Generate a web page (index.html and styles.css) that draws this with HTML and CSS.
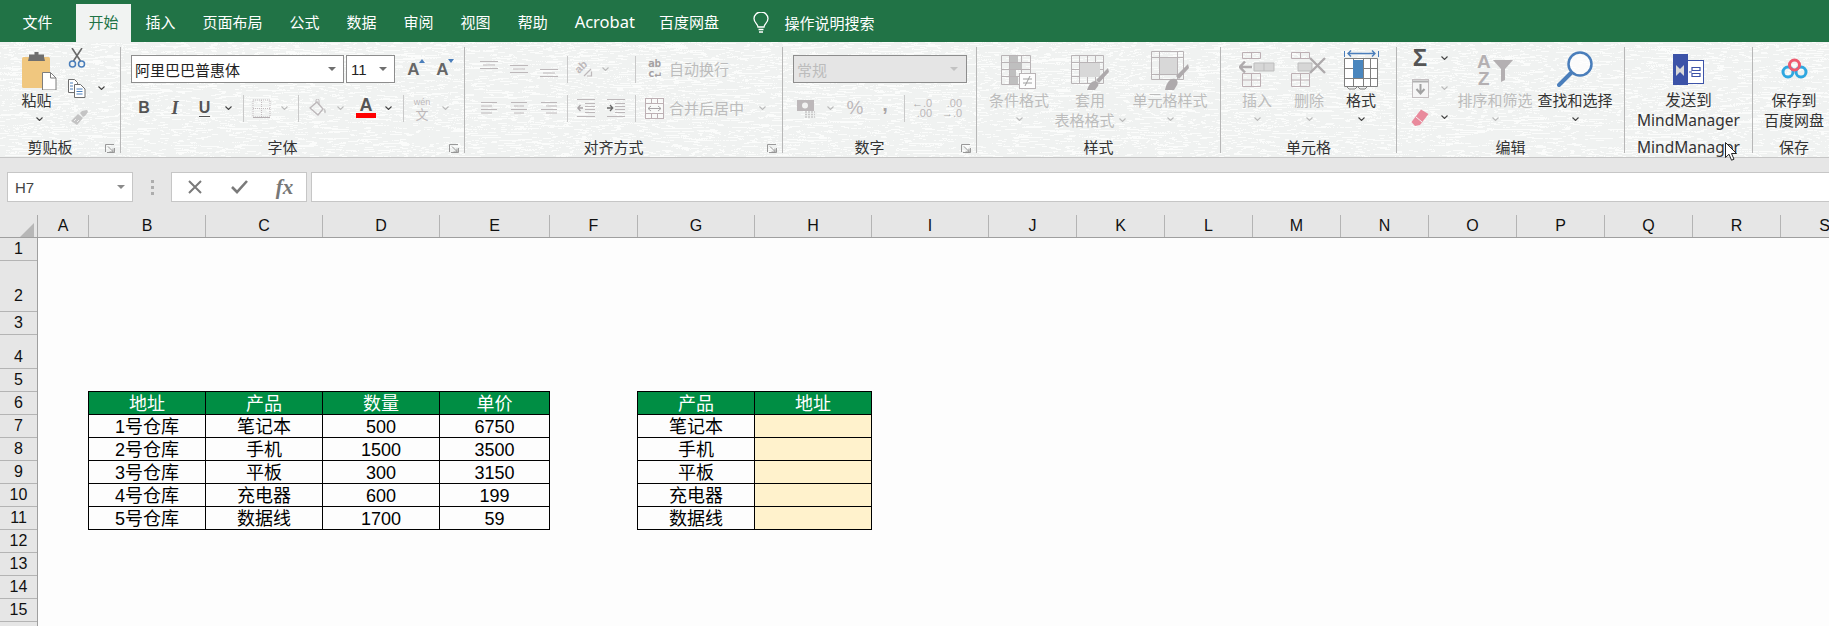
FILE: index.html
```html
<!DOCTYPE html>
<html lang="zh-CN">
<head>
<meta charset="utf-8">
<title>Excel</title>
<link rel="stylesheet" href="styles.css">
</head>
<body>
<svg class="sprite" width="0" height="0" aria-hidden="true">
  <symbol id="chev" viewBox="0 0 7 4"><path d="M.5.5 3.5 3.5 6.5.5" fill="none" stroke="currentColor" stroke-width="1.1"/></symbol>
  <symbol id="launch" viewBox="0 0 10 9"><path d="M.5 8V.5H9M3 2.5l5 5M8 4.5v3.5H4.5M2 8.5h7.5V4" fill="none" stroke="currentColor" stroke-width=".9"/></symbol>
</svg>

<div class="app">
  <header class="tabbar">
    <span class="tab tab-file">文件</span>
    <span class="tab tab-active">开始</span>
    <span class="tab">插入</span>
    <span class="tab">页面布局</span>
    <span class="tab">公式</span>
    <span class="tab">数据</span>
    <span class="tab">审阅</span>
    <span class="tab">视图</span>
    <span class="tab">帮助</span>
    <span class="tab tab-latin">Acrobat</span>
    <span class="tab">百度网盘</span>
    <span class="tell">
      <svg width="16" height="22" viewBox="0 0 16 22"><path d="M5 15c0-3-4-4-4-8.500a7 6.500 0 0 1 14 0C15 11 11 12 11 15zM5.500 17.500h5M6 20h4" fill="none" stroke="#fff" stroke-width="1.300"/></svg>
      <span>操作说明搜索</span>
    </span>
  </header>

  <section class="ribbon">
    <svg class="texture" width="1829" height="115" aria-hidden="true">
      <filter id="waves" x="0" y="0" width="100%" height="100%">
        <feTurbulence type="fractalNoise" baseFrequency="0.007 0.22" numOctaves="2" seed="7"/>
        <feColorMatrix values="0 0 0 0 1  0 0 0 0 1  0 0 0 0 1  1 0 0 0 0"/>
        <feComponentTransfer><feFuncA type="discrete" tableValues="0 0 0 0 0 0 0 0 0 0 0 0 0 0 0 .75 0 0 0 .75 0 0 0 .75 0 0 0 .75 0 0 0 .75 0 0 0 .75 0 0 0 .75 0 0 0 .75 0 0 0 0 0 0 0 0 0 0 0 0 0 0 0 0"/></feComponentTransfer>
      </filter>
      <rect width="1829" height="115" filter="url(#waves)"/>
    </svg>

    <!-- 剪贴板 -->
    <div class="group g1">
      <div class="gbody clip">
        <div class="paste">
          <svg width="35" height="39" viewBox="0 0 35 39"><rect x="0" y="6" width="28" height="31" rx="1.500" fill="#f0c77f"/><path d="M7 6V3.500h5.500V1h4v2.500H22V6l1 4H6z" fill="#6f6f6f"/><path d="M20.500 21.500h8l5.500 5.500v12h-13.500z" fill="#fff" stroke="#7d7d7d"/><path d="M28.500 21.500V27H34" fill="none" stroke="#7d7d7d"/></svg>
          <span class="t">粘贴</span>
          <svg class="chev dark"><use href="#chev"/></svg>
        </div>
        <div class="smallgrid clipgrid">
          <svg width="18" height="20" viewBox="0 0 18 20"><path d="M4 0l8.500 13M14 0 5.500 13" stroke="#6a6a6a" stroke-width="1.600" fill="none"/><circle cx="4.500" cy="16" r="3" fill="none" stroke="#4a7ebb" stroke-width="1.500"/><circle cx="13.500" cy="16" r="3" fill="none" stroke="#4a7ebb" stroke-width="1.500"/></svg>
          <span></span>
          <svg width="18" height="19" viewBox="0 0 18 19"><path d="M.5.500h6l3 3v10h-9z" fill="#fff" stroke="#6f6f6f"/><path d="M6.500 5.500h6l4.500 4.500v8.500H6.500z" fill="#fff" stroke="#6f6f6f"/><path d="M2 4h3M2 7h3M2 10h3M8.500 10h6M8.500 12.500h6M8.500 15h6" stroke="#4a7ebb"/></svg>
          <svg class="chev dark"><use href="#chev"/></svg>
          <svg class="painter" width="17" height="15" viewBox="0 0 17 15"><path d="M0 11 7 4l5 4-6 7zM9 3l2-2 5-1 1 2-3 4-2 1z" fill="#c4c4c4"/><path d="M3 11l2-2M6 12l2-2" stroke="#eee"/></svg>
          <span></span>
        </div>
      </div>
      <div class="glabel"><span>剪贴板</span><svg class="launch"><use href="#launch"/></svg></div>
    </div>

    <!-- 字体 -->
    <div class="group g2">
      <div class="gbody rows">
        <div class="row fontrow1">
          <div class="combo combo-font"><span>阿里巴巴普惠体</span><i class="caret"></i></div>
          <div class="combo combo-size"><span class="lat">11</span><i class="caret"></i></div>
          <span class="grow">A<i class="tri up"></i></span>
          <span class="grow">A<i class="tri down"></i></span>
        </div>
        <div class="row fontrow2">
          <b class="fmt">B</b>
          <i class="fmt italic">I</i>
          <span class="fmt under">U</span>
          <svg class="chev dark"><use href="#chev"/></svg>
          <i class="vdiv"></i>
          <svg width="19" height="19" viewBox="0 0 19 19"><path d="M1 1h17v17H1zM9.500 1v17M1 9.500h17" fill="none" stroke="#c3bcbf" stroke-dasharray="1 1"/><path d="M1 18.500h17" stroke="#b5b0b2"/></svg>
          <svg class="chev off"><use href="#chev"/></svg>
          <i class="vdiv"></i>
          <svg width="18" height="18" viewBox="0 0 18 18"><path d="M1 9 8 3l6 7-5 6z" fill="none" stroke="#bdb8ba" stroke-width="1.400"/><path d="M7 4V1.500a1.500 1.500 0 0 1 3 0V6" fill="none" stroke="#bdb8ba"/><path d="M15 9c2 2 2.500 4 1.500 5s-2-1-1.500-5z" fill="#c8c8c8"/></svg>
          <svg class="chev off"><use href="#chev"/></svg>
          <span class="fontcolor"><span>A</span><i></i></span>
          <svg class="chev dark"><use href="#chev"/></svg>
          <i class="vdiv"></i>
          <span class="wen"><small>wén</small><span>文</span></span>
          <svg class="chev off"><use href="#chev"/></svg>
        </div>
      </div>
      <div class="glabel"><span>字体</span><svg class="launch"><use href="#launch"/></svg></div>
    </div>

    <!-- 对齐方式 -->
    <div class="group g3">
      <div class="gbody rows">
        <div class="row alignrow1">
          <svg class="a1" width="18" height="20" viewBox="0 0 18 20"><path d="M0 2.500h18M3 6h12M0 9.500h18" stroke="#bdb8ba"/></svg>
          <svg width="18" height="20" viewBox="0 0 18 20"><path d="M0 6.500h18M3 10h12M0 13.500h18" stroke="#bdb8ba"/></svg>
          <svg width="18" height="20" viewBox="0 0 18 20"><path d="M0 10.500h18M3 14h12M0 17.500h18" stroke="#bdb8ba"/></svg>
          <i class="vdiv"></i>
          <svg width="18" height="18" viewBox="0 0 18 18"><text class="rot" transform="translate(4 14) rotate(-45)" x="0" y="0">ab</text><path d="M9 16 16 9M12 16h4.500v-4.500" fill="none" stroke="#bdb8ba" stroke-width="1.200"/></svg>
          <svg class="chev off"><use href="#chev"/></svg>
          <i class="vdiv vdiv-end"></i>
          <span class="abc"><span>ab</span><span>c↵</span></span>
          <span class="t off">自动换行</span>
        </div>
        <div class="row alignrow2">
          <svg width="16" height="12" viewBox="0 0 16 12"><path d="M0 .500h16M0 4h11M0 7.500h16M0 11h11" stroke="#bdb8ba"/></svg>
          <svg width="16" height="12" viewBox="0 0 16 12"><path d="M0 .500h16M3 4h10M0 7.500h16M3 11h10" stroke="#bdb8ba"/></svg>
          <svg width="16" height="12" viewBox="0 0 16 12"><path d="M0 .500h16M5 4h11M0 7.500h16M5 11h11" stroke="#bdb8ba"/></svg>
          <i class="vdiv"></i>
          <svg width="18" height="18" viewBox="0 0 18 18"><path d="M0 .500h18M8 4.500h10M8 7.500h10M8 10.500h10M8 13.500h10M0 17.500h18" stroke="#bdb8ba"/><path d="M6 9H1M3.500 6 .8 9l2.700 3" fill="none" stroke="#a8a4a6" stroke-width="1.300"/></svg>
          <svg width="18" height="18" viewBox="0 0 18 18"><path d="M0 .500h18M8 4.500h10M8 7.500h10M8 10.500h10M8 13.500h10M0 17.500h18" stroke="#bdb8ba"/><path d="M0 9h5M3 6l2.700 3L3 12" fill="none" stroke="#6a6a6a" stroke-width="1.300"/></svg>
          <i class="vdiv"></i>
          <svg width="19" height="21" viewBox="0 0 19 21"><rect x=".5" y=".5" width="18" height="20" fill="#fff" fill-opacity=".5" stroke="#bdb0b4"/><path d="M.5 5.500h18M.5 15.500h18M6.500.5v5M12.500.5v5M6.500 15.500v5M12.500 15.500v5" stroke="#bdb0b4"/><path d="M3 10.500h13M3 10.500l3-2.500M3 10.500l3 2.500M16 10.500 13 8M16 10.500 13 13" fill="none" stroke="#a8a4a6"/></svg>
          <span class="t off">合并后居中</span>
          <svg class="chev off"><use href="#chev"/></svg>
        </div>
      </div>
      <div class="glabel"><span>对齐方式</span><svg class="launch"><use href="#launch"/></svg></div>
    </div>

    <!-- 数字 -->
    <div class="group g4">
      <div class="gbody rows">
        <div class="row numrow1">
          <div class="combo combo-num"><span>常规</span><i class="caret"></i></div>
        </div>
        <div class="row numrow2">
          <svg width="19" height="19" viewBox="0 0 19 19"><rect x="0" y="1" width="17" height="11" fill="#bdb8ba"/><circle cx="8" cy="6.500" r="3" fill="#f2f2f2"/><path d="M8 13h10M8 15.500h10M8 18h10" stroke="#c8c8c8" stroke-width="1.300" stroke-dasharray="2 1"/></svg>
          <svg class="chev off"><use href="#chev"/></svg>
          <span class="sym">%</span>
          <span class="sym comma">,</span>
          <i class="vdiv"></i>
          <span class="dec"><span><b>←</b>.0</span><span>.00</span></span>
          <span class="dec"><span>.00</span><span><b>→</b>.0</span></span>
        </div>
      </div>
      <div class="glabel"><span>数字</span><svg class="launch"><use href="#launch"/></svg></div>
    </div>

    <!-- 样式 -->
    <div class="group g5">
      <div class="gbody bigs">
        <div class="big b84">
          <svg width="36" height="43" viewBox="0 0 36 43"><g fill="none" stroke="#b9b4b6"><path d="M.5 8.500h29v29H.5zM.5 15.500h29M.5 22.500h29M.5 29.500h29M8.500 8.500v29M20.500 8.500v29"/></g><path d="M9 9h8v6H9zM9 16h12v6H9zM9 23h6v6H9zM9 30h8v7H9z" fill="#bfbfbf"/><rect x="18.500" y="26.500" width="16" height="15" fill="#fdfdfd" stroke="#b9b4b6"/><path d="M22 32h9M22 36h9M24 39l5-10" stroke="#9e9e9e" fill="none"/></svg>
          <span class="t off">条件格式</span>
          <svg class="chev off"><use href="#chev"/></svg>
        </div>
        <div class="big b58">
          <svg width="38" height="43" viewBox="0 0 38 43"><g fill="none" stroke="#b9b4b6"><path d="M.5 8.500h32v28H.5zM.5 15.500h32M.5 22.500h32M.5 29.500h32M8.500 8.500v28M16.500 8.500v28M24.500 8.500v28"/></g><path d="M9 16h20v14H9z" fill="#d8d8d8"/><path d="M37 21 25 33l3 3 10-11z" fill="#aeaaac"/><path d="M16 43c2-6 5-9 8-9s4 3 3 5l-3 4z" fill="#aeaaac"/></svg>
          <span class="t off">套用</span>
          <span class="t off nowrap">表格格式 <svg class="chev off inl"><use href="#chev"/></svg></span>
        </div>
        <div class="big b102">
          <svg width="38" height="43" viewBox="0 0 38 43"><g fill="none" stroke="#b9b4b6"><path d="M.5 4.500h32v28H.5zM.5 10.500h32M.5 27.500h32M8.500 4.500v28M26.500 4.500v28"/></g><path d="M9 11h17v16H9z" fill="#d8d8d8"/><path d="M37 17 25 29l3 3 10-11z" fill="#aeaaac"/><path d="M14 43c2-9 6-12 10-11 3 1 3 4 2 6l-3 5z" fill="#aeaaac"/></svg>
          <span class="t off">单元格样式</span>
          <svg class="chev off"><use href="#chev"/></svg>
        </div>
      </div>
      <div class="glabel center"><span>样式</span></div>
    </div>

    <!-- 单元格 -->
    <div class="group g6">
      <div class="gbody bigs">
        <div class="big b52">
          <svg width="36" height="43" viewBox="0 0 36 43"><g fill="none" stroke="#bdb0b4"><path d="M3.500 5.500h18v6h-18zM12.500 5.500v6M3.500 26.500h18v13h-18zM12.500 26.500v13M3.500 33h18"/></g><path d="M15 16h20v8H15z" fill="#d6d6d6" stroke="#bdbdbd"/><path d="M25 16v8" stroke="#bdbdbd"/><path d="M13 20H1M6 14.500 .8 20 6 25.500" fill="none" stroke="#aeaaac" stroke-width="2.500"/></svg>
          <span class="t off">插入</span>
          <svg class="chev off"><use href="#chev"/></svg>
        </div>
        <div class="big b52">
          <svg width="36" height="43" viewBox="0 0 36 43"><g fill="none" stroke="#bdb0b4"><path d="M.5 5.500h18v6H.5zM9.500 5.500v6M.5 26.500h18v13H.5zM9.500 26.500v13M.5 33h18"/></g><path d="M7 16h14v8H7z" fill="#d6d6d6" stroke="#bdbdbd"/><path d="M19 11l15 15M34 11 19 26" stroke="#aeaaac" stroke-width="2.400"/></svg>
          <span class="t off">删除</span>
          <svg class="chev off"><use href="#chev"/></svg>
        </div>
        <div class="big b52">
          <svg width="35" height="43" viewBox="0 0 35 43"><path d="M.5 4v6M34.500 4v6" stroke="#4a7ebb"/><path d="M4 6.500h27M7 3.500 4 6.500l3 3M28 3.500l3 3-3 3" fill="none" stroke="#4a7ebb" stroke-width="1.400"/><path d="M.5 11.500h33v28H.5zM.5 21.500h33M.5 31.500h33M9.500 11.500v28M19.500 11.500v28M26.500 11.500v28" fill="#fff" stroke="#7f7f7f"/><rect x="9" y="13" width="10" height="18" fill="#4a86be"/><path d="M3 40l2 2h6l2-2M14 40l2 2h5l2-2" fill="none" stroke="#7f7f7f"/></svg>
          <span class="t">格式</span>
          <svg class="chev dark"><use href="#chev"/></svg>
        </div>
      </div>
      <div class="glabel center"><span>单元格</span></div>
    </div>

    <!-- 编辑 -->
    <div class="group g7">
      <div class="gbody bigs">
        <div class="smallgrid editgrid">
          <span class="sigma">Σ</span>
          <svg class="chev dark"><use href="#chev"/></svg>
          <svg width="17" height="19" viewBox="0 0 17 19"><rect x=".5" y=".5" width="16" height="18" fill="#f6f6f6" stroke="#c4bfc1"/><path d="M.5 2.500h16" stroke="#b0b0b0" stroke-width="2"/><path d="M8.500 5v9M4.500 10l4 4.500 4-4.500" fill="none" stroke="#a2a2a2" stroke-width="2"/></svg>
          <svg class="chev off"><use href="#chev"/></svg>
          <svg width="18" height="17" viewBox="0 0 18 17"><path d="M10 .5 17.500 5 9 16l-5 1-3.500-4z" fill="#e98a9c"/><path d="M5 8l6 5" stroke="#f3f3f3"/></svg>
          <svg class="chev dark"><use href="#chev"/></svg>
        </div>
        <div class="big b78 gap2">
          <svg width="37" height="43" viewBox="0 0 37 43"><text class="az" x="0" y="21">A</text><text class="az" x="1" y="38">Z</text><path d="M16 13h20l-8 9v11l-4 2V22z" fill="#b4b0b2"/></svg>
          <span class="t off">排序和筛选</span>
          <svg class="chev off"><use href="#chev"/></svg>
        </div>
        <div class="big b78">
          <svg width="36" height="43" viewBox="0 0 36 43"><circle cx="23" cy="17" r="11.500" fill="#fff" fill-opacity=".7" stroke="#4a7ebb" stroke-width="2.500"/><path d="M14 26 2 38" stroke="#4a7ebb" stroke-width="4" stroke-linecap="round"/></svg>
          <span class="t">查找和选择</span>
          <svg class="chev dark"><use href="#chev"/></svg>
        </div>
      </div>
      <div class="glabel center"><span>编辑</span></div>
    </div>

    <!-- MindManager -->
    <div class="group g8">
      <div class="gbody bigs">
        <div class="big bfull">
          <svg width="31" height="43" viewBox="0 0 31 43"><rect x="11.500" y="13.500" width="19" height="23" fill="#fff" stroke="#3c53a8"/><rect x="0" y="7" width="15" height="31" fill="#3c53a8"/><path d="M3 18l4 4 4-4v11l-4-4-4 4z" fill="#d8d8d8"/><path d="M16 25h3M19 20.500h8v3h-8zM19 26.500h8v3h-8z" fill="none" stroke="#3c53a8" stroke-width="1.200"/></svg>
          <span class="t">发送到</span>
          <span class="t">MindManager</span>
        </div>
      </div>
      <div class="glabel center"><span>MindManager</span></div>
    </div>

    <!-- 保存 -->
    <div class="group g9">
      <div class="gbody bigs">
        <div class="big bfull">
          <svg width="27" height="43" viewBox="0 0 27 43"><circle cx="7" cy="25" r="5" fill="none" stroke="#2ea7e0" stroke-width="3"/><circle cx="20" cy="25" r="5" fill="none" stroke="#2ea7e0" stroke-width="3"/><circle cx="13.500" cy="18" r="5" fill="none" stroke="#ee5a6f" stroke-width="3"/></svg>
          <span class="t">保存到</span>
          <span class="t">百度网盘</span>
        </div>
      </div>
      <div class="glabel center"><span>保存</span></div>
    </div>
  </section>

  <section class="fbar">
    <div class="namebox"><span>H7</span><i class="caret caret-gray"></i></div>
    <div class="grip"><i></i><i></i><i></i></div>
    <div class="fbtns">
      <svg width="14" height="14" viewBox="0 0 14 14"><path d="M1 1l12 12M13 1 1 13" stroke="#7a7a7a" stroke-width="2"/></svg>
      <svg width="17" height="14" viewBox="0 0 17 14"><path d="M1 7l5 5L16 1" fill="none" stroke="#7a7a7a" stroke-width="2.600"/></svg>
      <span class="fx">fx</span>
    </div>
    <div class="finput"></div>
  </section>

  <section class="sheet">
    <div class="colhead">
      <div class="corner"><i></i></div>
      <div class="ch ca">A</div>
      <div class="ch cw">B</div>
      <div class="ch cw">C</div>
      <div class="ch cw">D</div>
      <div class="ch ce">E</div>
      <div class="ch cn">F</div>
      <div class="ch cw">G</div>
      <div class="ch cw">H</div>
      <div class="ch cw">I</div>
      <div class="ch cn">J</div>
      <div class="ch cn">K</div>
      <div class="ch cn">L</div>
      <div class="ch cn">M</div>
      <div class="ch cn">N</div>
      <div class="ch cn">O</div>
      <div class="ch cn">P</div>
      <div class="ch cn">Q</div>
      <div class="ch cn">R</div>
      <div class="ch cn">S</div>
    </div>
    <div class="sbody">
      <div class="rowhead">
        <div class="rh">1</div>
        <div class="rh r51">2</div>
        <div class="rh">3</div>
        <div class="rh r34">4</div>
        <div class="rh">5</div>
        <div class="rh">6</div>
        <div class="rh">7</div>
        <div class="rh">8</div>
        <div class="rh">9</div>
        <div class="rh">10</div>
        <div class="rh">11</div>
        <div class="rh">12</div>
        <div class="rh">13</div>
        <div class="rh">14</div>
        <div class="rh">15</div>
      </div>
      <div class="canvas">
        <table class="data d1">
          <colgroup><col class="tw"><col class="tw"><col class="tw"><col class="te"></colgroup>
          <tr><th>地址</th><th>产品</th><th>数量</th><th>单价</th></tr>
          <tr><td>1号仓库</td><td>笔记本</td><td>500</td><td>6750</td></tr>
          <tr><td>2号仓库</td><td>手机</td><td>1500</td><td>3500</td></tr>
          <tr><td>3号仓库</td><td>平板</td><td>300</td><td>3150</td></tr>
          <tr><td>4号仓库</td><td>充电器</td><td>600</td><td>199</td></tr>
          <tr><td>5号仓库</td><td>数据线</td><td>1700</td><td>59</td></tr>
        </table>
        <table class="data d2">
          <colgroup><col class="tw"><col class="tw"></colgroup>
          <tr><th>产品</th><th>地址</th></tr>
          <tr><td>笔记本</td><td class="fill"></td></tr>
          <tr><td>手机</td><td class="fill"></td></tr>
          <tr><td>平板</td><td class="fill"></td></tr>
          <tr><td>充电器</td><td class="fill"></td></tr>
          <tr><td>数据线</td><td class="fill"></td></tr>
        </table>
      </div>
    </div>
  </section>

  <svg class="cursor" width="13" height="19" viewBox="0 0 13 19"><path d="M.5.500v15l3.500-3.300 2.500 6 2.500-1-2.500-5.700h5z" fill="#fff" stroke="#222"/></svg>
</div>
</body>
</html>
```
FILE: styles.css
```css
* { box-sizing: border-box; }
html, body { margin: 0; padding: 0; background: #fdfdfd; }
body { width: 1829px; height: 626px; overflow: hidden; font-family: "Noto Sans", "Noto Sans CJK SC", sans-serif; color: #3c3c3c; }
.sprite { position: absolute; }
.app { position: relative; width: 1829px; height: 626px; overflow: hidden; display: flex; flex-direction: column; }
svg { display: block; flex: none; }

/* tab bar */
.tabbar { height: 42px; flex: none; background: #217346; color: #fff; display: flex; align-items: flex-end; gap: 2px; padding-left: 10px; font-size: 15px; }
.tab { height: 38px; line-height: 36px; padding: 0 12.5px; white-space: nowrap; font-family: "Noto Sans CJK SC", sans-serif; }
.tab-latin { font-family: "Noto Sans", sans-serif; font-size: 16.5px; margin-right: -3px; }
.tab-file { margin-right: 9px; }
.tab-active { background: #f1f3f2; color: #217346; }
.tell { display: flex; align-items: center; gap: 15px; height: 38px; margin-left: 20px; line-height: 36px; font-family: "Noto Sans CJK SC", sans-serif; }

/* ribbon */
.ribbon { position: relative; height: 116px; flex: none; background: #f0f2f1; display: flex; padding-top: 5px; padding-bottom: 5px; border-bottom: 1px solid #c6c6c6; font-size: 15px; }
.texture { position: absolute; left: 0; top: 0; pointer-events: none; }
.group { position: relative; display: flex; flex-direction: column; height: 106px; border-right: 1px solid #b7b7b7; }
.g1 { width: 121px; }
.g2 { width: 344px; }
.g3 { width: 318px; }
.g4 { width: 194px; }
.g5 { width: 244px; }
.g6 { width: 176px; }
.g7 { width: 228px; }
.g8 { width: 128px; }
.g9 { flex: 1; border-right: 0; padding-left: 6px; }
.gbody { flex: 1; min-height: 0; }
.glabel { height: 16px; padding-top: 4px; line-height: 20px; display: flex; align-items: center; text-align: center; color: #333; font-family: "Noto Sans", "Noto Sans CJK SC", sans-serif; white-space: nowrap; }
.glabel span { flex: 1; }
.g8 .glabel, .g8 .t { font-size: 15.5px; }
.launch { width: 10px; height: 9px; margin: 3px 5px 0 5px; color: #8f8f8f; }
.t { display: block; line-height: 20px; height: 20px; color: #333; white-space: nowrap; }
.off { color: #bdbdbd; }
.t.off { color: #bcbcbc; }
.row .t { justify-self: start; }
.nowrap { display: flex; align-items: center; }
.chev { width: 7px; height: 4px; color: #555; }
.chev.dark { color: #444; }
.chev.off { color: #bbb; }
.chev.inl { margin-left: 4px; }

/* clipboard */
.clip { display: flex; padding-left: 20px; }
.paste { width: 38px; display: flex; flex-direction: column; align-items: center; padding-top: 4px; }
.paste .t { margin-left: -5px; }
.paste .chev { margin-top: 7px; }
.smallgrid { display: grid; justify-items: center; align-items: center; grid-template-rows: 22px 38px 20px; }
.clipgrid { grid-template-columns: 36px 12px; margin-left: 0; padding-left: 1px; }
.painter { margin-left: 4px; }

/* rows */
.rows { display: flex; flex-direction: column; gap: 11px; padding: 8px 0 0 10px; }
.row { height: 28px; display: grid; align-items: center; justify-items: center; }
.vdiv { display: block; width: 1px; height: 27px; background: #c9c9c9; }
.vdiv-end { justify-self: end; margin-right: 4px; }
.combo { height: 28px; border: 1px solid #8d8d8d; background: #fff; display: flex; align-items: center; padding: 0 7px 0 3px; color: #222; justify-self: start; }
.combo span { flex: 1; }
.combo-font { width: 213px; font-family: "Noto Sans CJK SC", sans-serif; }
.combo-size { width: 49px; }
.lat { font-family: "Liberation Sans", sans-serif; padding-left: 1px; }
.combo-num { width: 174px; background: #e5e5e5; color: #bcbcbc; border-color: #8d8d8d; padding-right: 8px; }
.caret { display: block; width: 0; height: 0; border-left: 4px solid transparent; border-right: 4px solid transparent; border-top: 4px solid #6f6f6f; }
.combo-num .caret { border-top-color: #c2c2c2; }
.caret-gray { border-top-color: #8a8a8a; }
.fontrow1 { grid-template-columns: 215px 53px 29px 29px; }
.grow { position: relative; font-family: "Liberation Sans", sans-serif; font-weight: 700; font-size: 17px; color: #666; line-height: 20px; margin-top: 2px; }
.tri { position: absolute; right: -5px; width: 0; height: 0; border-left: 3px solid transparent; border-right: 3px solid transparent; }
.tri.up { top: -1px; border-bottom: 4px solid #4a7ebb; }
.tri.down { top: -1px; border-top: 4px solid #4a7ebb; }
.fontrow2 { grid-template-columns: 26px 36px 23px 24px 6px 30px 16px 12px 28px 16px 36px 8px 22px 16px 30px; width: 324px; }
.fmt { font-family: "Liberation Sans", sans-serif; font-size: 16px; color: #555; line-height: 18px; }
.italic { font-family: "Liberation Serif", serif; font-weight: 700; font-style: italic; font-size: 18px; }
.under { font-weight: 700; border-bottom: 1.5px solid #555; line-height: 16px; }
.fontcolor { display: flex; flex-direction: column; align-items: center; width: 20px; }
.fontcolor span { font-family: "Liberation Sans", sans-serif; font-weight: 700; font-size: 18px; line-height: 15px; color: #555; }
.fontcolor i { display: block; width: 20px; height: 5px; background: #f00; }
.wen { display: flex; flex-direction: column; align-items: center; color: #bdb8ba; line-height: 10px; width: 20px; }
.wen small { font-size: 9px; font-family: "Liberation Sans", sans-serif; }
.wen span { font-size: 13px; line-height: 13px; font-family: "Noto Sans CJK SC", sans-serif; }
.alignrow1 { grid-template-columns: 28px 32px 28px 8px 26px 16px 27px 29px auto; justify-items: center; width: 300px; }
.alignrow2 { grid-template-columns: 28px 32px 28px 8px 30px 30px 9px 29px 75px 36px; width: 300px; }
.abc { display: flex; flex-direction: column; font-family: "DejaVu Sans Mono", monospace; font-size: 11px; line-height: 10px; color: #a4a0a2; font-weight: 700; }
.rot { font-family: "Liberation Sans", sans-serif; font-size: 11px; fill: #bdb8ba; font-weight: 700; }
.numrow1 { grid-template-columns: 174px; }
.numrow2 { grid-template-columns: 26px 22px 28px 32px 6px 30px 30px; width: 174px; }
.sym { font-family: "Liberation Sans", sans-serif; font-size: 19px; color: #bdb8ba; }
.comma { font-weight: 700; font-size: 20px; margin-top: -8px; color: #a8a4a6; }
.dec { display: flex; flex-direction: column; align-items: flex-end; font-family: "Liberation Sans", sans-serif; font-size: 11px; line-height: 10px; color: #bdb8ba; }
.dec b { color: #aaa; }

/* big buttons */
.bigs { display: flex; }
.big { display: flex; flex-direction: column; align-items: center; flex: none; }
.big > .chev { margin-top: 7px; }
.b84 { width: 84px; }
.b58 { width: 58px; }
.b102 { width: 102px; }
.b52 { width: 52px; }
.g6 .bigs { padding-left: 10px; }
.b78 { width: 78px; }
.gap2 { margin-right: 2px; }
.bfull { width: 100%; }
.az { font-family: "Liberation Sans", sans-serif; font-size: 19px; font-weight: 700; fill: #b4b0b2; }
.editgrid { grid-template-columns: 24px 24px; padding-left: 11px; width: 59px; }
.sigma { font-family: "Liberation Sans", sans-serif; font-size: 24px; font-weight: 700; line-height: 22px; color: #555; }

/* formula bar */
.fbar { height: 57px; flex: none; background: #e6e6e6; display: flex; align-items: flex-start; padding: 14px 0 0 7px; }
.namebox { width: 126px; height: 30px; background: #fff; border: 1px solid #c6c6c6; display: flex; align-items: center; justify-content: space-between; padding: 0 7px 0 7px; font-family: "Liberation Sans", sans-serif; font-size: 15px; color: #444; }
.grip { width: 38px; height: 30px; display: flex; flex-direction: column; align-items: center; justify-content: center; gap: 3px; }
.grip i { width: 3px; height: 3px; background: #adadad; }
.fbtns { width: 136px; height: 30px; background: #fff; border: 1px solid #c6c6c6; display: grid; grid-template-columns: 45px 45px 45px; justify-items: center; align-items: center; }
.fx { font-family: "Liberation Serif", serif; font-style: italic; font-weight: 700; font-size: 21px; line-height: 24px; color: #777; }
.finput { flex: 1; height: 30px; margin-left: 4px; background: #fff; border: 1px solid #c6c6c6; border-right: 0; }

/* sheet */
.sheet { flex: 1; min-height: 0; display: flex; flex-direction: column; }
.colhead { height: 23px; flex: none; display: flex; background: #e6e6e6; border-bottom: 1px solid #9f9f9f; font-family: "Liberation Sans", sans-serif; font-size: 16px; color: #111; }
.corner { width: 38px; flex: none; height: 22px; border-right: 1px solid #a9a9a9; display: flex; justify-content: flex-end; align-items: flex-end; padding: 0 3px 0 0; }
.corner i { display: block; width: 0; height: 0; border-left: 14px solid transparent; border-bottom: 14px solid #b7b7b7; }
.ch { height: 22px; line-height: 22px; text-align: center; border-right: 1px solid #b4b4b4; flex: none; }
.ca { width: 51px; }
.cw { width: 117px; }
.ce { width: 110px; }
.cn { width: 88px; }
.sbody { flex: 1; min-height: 0; display: flex; }
.rowhead { width: 38px; flex: none; background: #e6e6e6; border-right: 1px solid #9f9f9f; font-family: "Liberation Sans", sans-serif; font-size: 16px; color: #111; }
.rh { height: 23px; border-bottom: 1px solid #b4b4b4; display: flex; align-items: flex-end; justify-content: center; line-height: 22px; }
.r51 { height: 51px; padding-bottom: 4px; }
.r34 { height: 34px; }
.canvas { flex: 1; display: flex; align-items: flex-start; padding: 153px 0 0 50px; gap: 87px; }
.data { border-collapse: collapse; table-layout: fixed; font-family: "Liberation Sans", "Noto Sans CJK SC", sans-serif; font-size: 18px; color: #000; }
.d1 { width: 462px; }
.d2 { width: 234px; }
.tw { width: 117px; }
.te { width: 110px; }
.data th, .data td { height: 23px; padding: 2px 0 0; border: 1px solid #000; text-align: center; font-weight: 400; line-height: 20px; overflow: hidden; white-space: nowrap; }
.data th { background: #008e44; color: #fff; }
.fill { background: #fff2cc; }

.cursor { position: absolute; left: 1725px; top: 142px; }
```
